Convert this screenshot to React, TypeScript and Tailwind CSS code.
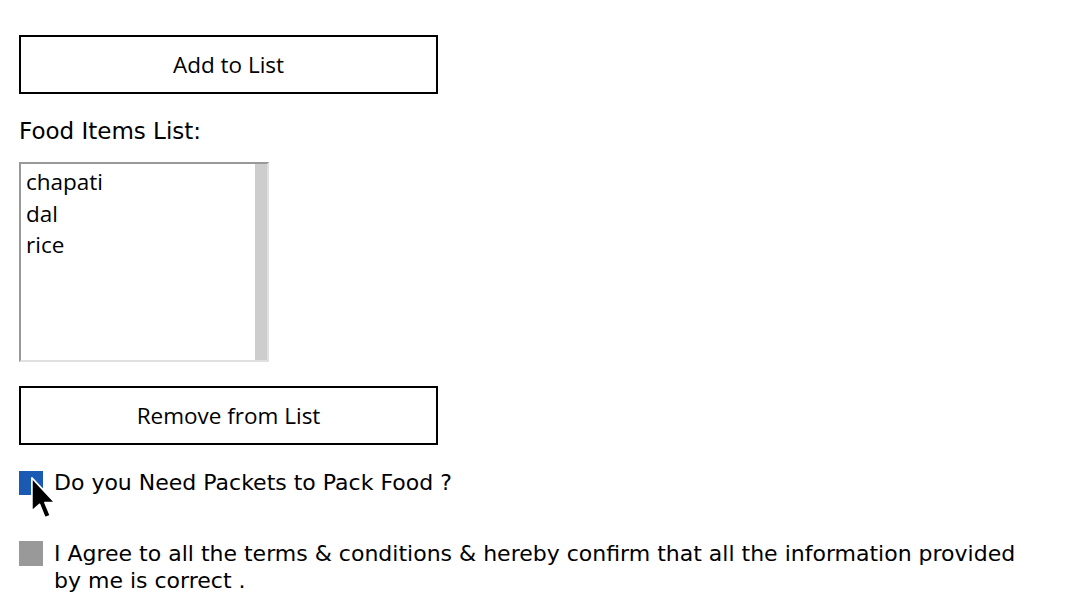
import React from "react";

const sans = { fontFamily: '"DejaVu Sans", sans-serif' };

function Cursor() {
  return (
    <svg
      className="absolute left-[30px] top-[476px] pointer-events-none"
      width="28"
      height="46"
      viewBox="0 0 23 38"
    >
      <path
        d="M1.5 1.5 L1.5 29 L7.8 23.4 L12.3 34.5 L16.8 32.7 L12.3 22 L20.6 22 Z"
        fill="#000"
        stroke="#fff"
        strokeWidth="1.4"
        strokeLinejoin="round"
      />
    </svg>
  );
}

export default function App() {
  return (
    <div className="relative w-[1083px] h-[600px] bg-white overflow-hidden text-black pl-[19px] pt-[35px]">
      <button className="w-[419px] h-[59px] border-2 border-black bg-white flex items-center justify-center text-[22.5px] font-['Open_Sans',sans-serif] leading-none pt-[1px]">
        Add to List
      </button>

      <div className="mt-[24px] h-[27px] leading-[27px] text-[23px]" style={sans}>
        Food Items List:
      </div>

      <div className="mt-[17px] w-[250px] h-[200px] flex border-2 border-t-[#999] border-l-[#999] border-r-[#e0e0e0] border-b-[#e0e0e0] bg-white">
        <div className="flex-1 pl-[5px] pt-[2px] font-['Open_Sans',sans-serif] text-[22.5px] leading-[31.5px]">
          <div>chapati</div>
          <div>dal</div>
          <div>rice</div>
        </div>
        <div className="w-[12px] bg-[#cdcdcd]" />
      </div>

      <button className="mt-[24px] w-[419px] h-[59px] border-2 border-black bg-white flex items-center justify-center text-[22.5px] font-['Open_Sans',sans-serif] leading-none pt-[1px]">
        Remove from List
      </button>

      <div className="mt-[24px] flex items-center gap-[11px] h-[27px]" style={sans}>
        <div className="w-[24px] h-[24px] bg-[#1a5ab3] shrink-0" />
        <span className="text-[22px] leading-[27px]">Do you Need Packets to Pack Food ?</span>
      </div>

      <div className="mt-[44px] flex items-start gap-[11px]" style={sans}>
        <div className="mt-[1px] w-[24px] h-[25px] bg-[#999999] shrink-0" />
        <span className="w-[985px] text-[22px] leading-[27px]">
          I Agree to all the terms &amp; conditions &amp; hereby confirm that all the information provided by me is correct .
        </span>
      </div>

      <Cursor />
    </div>
  );
}
